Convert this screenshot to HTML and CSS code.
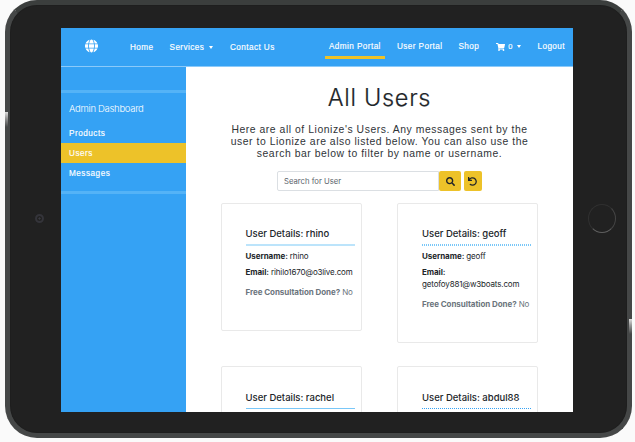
FILE: index.html
```html
<!DOCTYPE html>
<html lang="en">
<head>
<meta charset="utf-8">
<title>All Users</title>
<link rel="stylesheet" href="styles.css">
</head>
<body>
<div class="tablet">
  <span class="camera"></span>
  <span class="home-button"></span>
  <div class="screen">
    <header class="navbar">
      <svg class="globe" viewBox="0 0 496 512"><path d="M336.5 160C322 70.7 287.8 8 248 8s-74 62.7-88.5 152h177zM152 256c0 22.2 1.2 43.5 3.3 64h185.3c2.1-20.5 3.3-41.8 3.3-64s-1.2-43.5-3.3-64H155.3c-2.1 20.5-3.3 41.8-3.3 64zm324.7-96c-28.6-67.9-86.5-120.4-158-141.6 24.4 33.8 41.2 84.7 50 141.6h108zM177.2 18.4C105.8 39.6 47.8 92.1 19.3 160h108c8.7-56.9 25.5-107.8 49.9-141.6zM487.4 192H372.7c2.1 21 3.3 42.5 3.3 64s-1.2 43-3.3 64h114.6c5.5-20.5 8.6-41.8 8.6-64s-3.1-43.5-8.5-64zM120 256c0-21.5 1.2-43 3.3-64H8.6C3.2 212.5 0 233.8 0 256s3.2 43.5 8.6 64h114.6c-2-21-3.2-42.5-3.2-64zm39.5 96c14.5 89.3 48.7 152 88.5 152s74-62.7 88.5-152h-177zm159.3 141.6c71.4-21.2 129.4-73.7 158-141.6h-108c-8.8 56.9-25.6 107.8-50 141.6zM19.3 352c28.6 67.9 86.5 120.4 158 141.6-24.4-33.8-41.2-84.7-50-141.6h-108z"/></svg>
      <nav class="links links-main">
        <a class="home">Home</a>
        <a class="services"><span>Services</span><i class="caret"></i></a>
        <a>Contact Us</a>
      </nav>
      <nav class="links links-account">
        <a class="current">Admin Portal</a>
        <a class="portal">User Portal</a>
        <a class="shop">Shop</a>
        <a class="cart"><svg viewBox="0 0 576 512"><path d="M528.12 301.319l47.273-208C578.806 78.301 567.391 64 551.99 64H159.208l-9.166-44.81C147.758 8.021 137.93 0 126.529 0H24C10.745 0 0 10.745 0 24v16c0 13.255 10.745 24 24 24h69.883l70.248 343.435C147.325 417.1 136 435.222 136 456c0 30.928 25.072 56 56 56s56-25.072 56-56c0-15.674-6.447-29.835-16.824-40h209.647C430.447 426.165 424 440.326 424 456c0 30.928 25.072 56 56 56s56-25.072 56-56c0-22.172-12.888-41.332-31.579-50.405l5.517-24.276c3.413-15.018-8.002-29.319-23.403-29.319H218.117l-6.545-32h293.145c11.206 0 20.92-7.754 23.403-18.681z"/></svg><span>0</span><i class="caret"></i></a>
        <a>Logout</a>
      </nav>
    </header>
    <div class="body">
      <aside class="sidebar">
        <div class="menu">
          <h2>Admin Dashboard</h2>
          <a>Products</a>
          <a class="selected">Users</a>
          <a>Messages</a>
        </div>
      </aside>
      <main class="content">
        <h1>All Users</h1>
        <p class="intro">Here are all of Lionize's Users. Any messages sent by the<br>user to Lionize are also listed below. You can also use the<br>search bar below to filter by name or username.</p>
        <form class="search">
          <input type="text" placeholder="Search for User">
          <button type="button" class="find"><svg viewBox="0 0 512 512"><path d="M505 442.7L405.3 343c-4.5-4.5-10.6-7-17-7H372c27.6-35.3 44-79.7 44-128C416 93.1 322.9 0 208 0S0 93.1 0 208s93.1 208 208 208c48.3 0 92.7-16.4 128-44v16.3c0 6.4 2.5 12.5 7 17l99.7 99.7c9.4 9.4 24.6 9.4 33.9 0l28.3-28.3c9.4-9.4 9.4-24.6.1-34zM208 336c-70.7 0-128-57.2-128-128 0-70.7 57.2-128 128-128 70.7 0 128 57.2 128 128 0 70.7-57.2 128-128 128z"/></svg></button>
          <button type="button" class="reset"><svg viewBox="0 0 512 512"><path d="M212.333 224.333H12c-6.627 0-12-5.373-12-12V12C0 5.373 5.373 0 12 0h48c6.627 0 12 5.373 12 12v78.112C117.773 39.279 184.26 7.47 258.175 8.007c136.906.994 246.448 111.623 246.157 248.532C504.041 393.258 393.12 504 256.333 504c-64.089 0-122.496-24.313-166.51-64.215-5.099-4.622-5.334-12.554-.467-17.42l33.967-33.967c4.474-4.474 11.662-4.717 16.401-.525C170.76 415.336 211.58 432 256.333 432c97.268 0 176-78.716 176-176 0-97.267-78.716-176-176-176-58.496 0-110.28 28.476-142.274 72.333h98.274c6.627 0 12 5.373 12 12v48c0 6.627-5.373 12-12 12z"/></svg></button>
        </form>
        <div class="cards">
          <article class="card">
            <h3>User Details: rhino</h3>
            <p><b>Username:</b> rhino</p>
            <p class="email"><b>Email:</b> rihilo1670@o3live.com</p>
            <p class="status"><b>Free Consultation Done?</b> No</p>
          </article>
          <article class="card dotted">
            <h3>User Details: geoff</h3>
            <p><b>Username:</b> geoff</p>
            <p class="email"><b>Email:</b><br>getofoy881@w3boats.com</p>
            <p class="status"><b>Free Consultation Done?</b> No</p>
          </article>
          <article class="card thin">
            <h3>User Details: rachel</h3>
          </article>
          <article class="card thin dotted">
            <h3>User Details: abdul88</h3>
          </article>
        </div>
      </main>
    </div>
  </div>
</div>
</body>
</html>
```
FILE: styles.css
```css
* { box-sizing: border-box; }
body {
  margin: 0;
  height: 442px;
  overflow: hidden;
  background: #fafafa;
  font-family: Inter, "Liberation Sans", sans-serif;
  color: #212529;
}
h1, h2, h3, p { margin: 0; font-weight: 400; }
svg { display: block; fill: currentColor; }

.tablet {
  position: relative;
  width: 627px;
  height: 438px;
  margin-left: 5px;
  padding: 23px 51px;
  border: 5px solid #454747;
  border-top-color: #3b3e3d;
  border-radius: 32px;
  background: #212121;
  box-shadow: inset 0 0 1px #111;
}
.tablet::before, .tablet::after {
  content: "";
  position: absolute;
  width: 3px;
  height: 15px;
  background: linear-gradient(#ddd, #999 40%, #454747);
}
.tablet::before { left: -5px; top: 107px; }
.tablet::after { right: -5px; top: 314px; }
.camera {
  position: absolute;
  left: 25px;
  top: 209px;
  width: 9px;
  height: 9px;
  border: 2px solid #34343a;
  border-radius: 50%;
  background: radial-gradient(#3a3a42 25%, #222 35%);
}
.home-button {
  position: absolute;
  left: 578px;
  top: 199px;
  width: 28px;
  height: 29px;
  border: 1px solid;
  border-color: #303030 #454545 #606060 #303030;
  border-radius: 50%;
}
.screen {
  display: flex;
  flex-direction: column;
  width: 512px;
  height: 384px;
  overflow: hidden;
  background: #fff;
}

.navbar {
  display: flex;
  flex: 0 0 39px;
  padding: 0 8px 0 24px;
  border-bottom: 1px solid #8bcafa;
  background: #35a2f4;
  color: #fff;
}
.globe { width: 13px; height: 14px; margin-top: 11px; }
.links { display: flex; align-items: flex-start; font: 400 8.2px/12px "Liberation Sans", sans-serif; -webkit-text-stroke: .15px #fff; letter-spacing: .42px; white-space: nowrap; }
.links-main { margin: 14px 0 0 32px; }
.home { width: 39.5px; }
.services { width: 60.5px; }
.services, .cart { display: flex; align-items: center; height: 12px; }
.caret {
  margin: -2px 0 0 5px;
  border: 2.5px solid transparent;
  border-top-color: #fff;
  border-bottom: 0;
}
.services .caret { border-top-width: 3px; }
.links-account { margin: 13px 0 0 auto; }
.current { height: 18px; padding: 0 4px; border-bottom: 3px solid #edc229; }
.portal { margin-left: 12px; }
.shop { margin-left: 16px; }
.cart { margin: 0 16px 0 17px; }
.cart svg { width: 9px; height: 8px; margin: -1px 3px 0 0; }
.cart span { font-size: 7.5px; letter-spacing: 0; }
.cart .caret { border-top-width: 3px; }

.body { display: flex; flex: 1; min-height: 0; }
.sidebar { flex: 0 0 125px; padding-top: 23px; background: #35a2f4; color: #fff; }
.menu { height: 104px; padding-top: 10px; border: solid #54b3f7; border-width: 3px 0; }
.menu h2 { padding-left: 8px; font-size: 9.5px; font-weight: 300; line-height: 12px; margin-bottom: 8px; letter-spacing: -.3px; }
.menu a { display: block; height: 20px; padding-left: 8px; font: 400 8.2px/22px "Liberation Sans", sans-serif; -webkit-text-stroke: .15px #fff; letter-spacing: .5px; }
.menu .selected { background: #edc229; }

.content { flex: 1; min-width: 0; }
h1 { margin-top: 14.5px; font-size: 23.5px; font-weight: 300; line-height: 32px; letter-spacing: .7px; text-align: center; -webkit-text-stroke: .2px #212529; }
.intro { margin-top: 10.5px; font: 400 10.4px/12px "Liberation Sans", sans-serif; letter-spacing: .54px; text-align: center; white-space: nowrap; color: #303438; }
.search { display: flex; height: 20px; margin: 11px 0 0 91px; }
.search input {
  width: 162px;
  padding: 0 6px;
  border: 1px solid #dbdfe3;
  border-radius: 2px 0 0 2px;
  font: 400 7.7px Inter, sans-serif;
}
.search input::placeholder { color: #5b646c; opacity: 1; }
.search button { display: grid; place-items: center; padding: 0; border: 0; border-radius: 2px; background: #edc229; color: #212529; }
.search svg { width: 9px; height: 9px; }
.find { width: 22px; }
.reset { width: 18px; margin-left: 2.5px; }

.cards { display: grid; grid-template-columns: 141px 141px; column-gap: 35px; row-gap: 23px; align-items: start; margin: 12px 0 0 35px; }
.card {
  height: 128px;
  padding: 23px 6px 0 23.5px;
  border: 1px solid #e9e9e9;
  border-radius: 2px;
  font-size: 8px;
  line-height: 12px;
  letter-spacing: -.16px;
  white-space: nowrap;
}
.card.dotted { height: 140px; padding-left: 24px; }
.card h3 { height: 19px; margin-bottom: 4px; border-bottom: 2px solid #bce4fb; font-size: 9.5px; font-weight: 500; line-height: 14px; letter-spacing: 0; }
.card.dotted h3 {
  border-bottom: 0;
  background: repeating-linear-gradient(90deg, #79c7f8 0 1px, #fff 1px 2px) bottom / 100% 2px no-repeat;
}
.card.thin h3 { height: 19px; border-bottom: 1px solid #79c7f8; line-height: 15px; }
.card.thin.dotted h3 { border-bottom: 1px dotted #35a2f4; background: none; }
.card b { font-weight: 700; letter-spacing: -.06px; }
.email { margin-top: 4px; }
.status { margin-top: 8px; color: #6c757d; }
```
